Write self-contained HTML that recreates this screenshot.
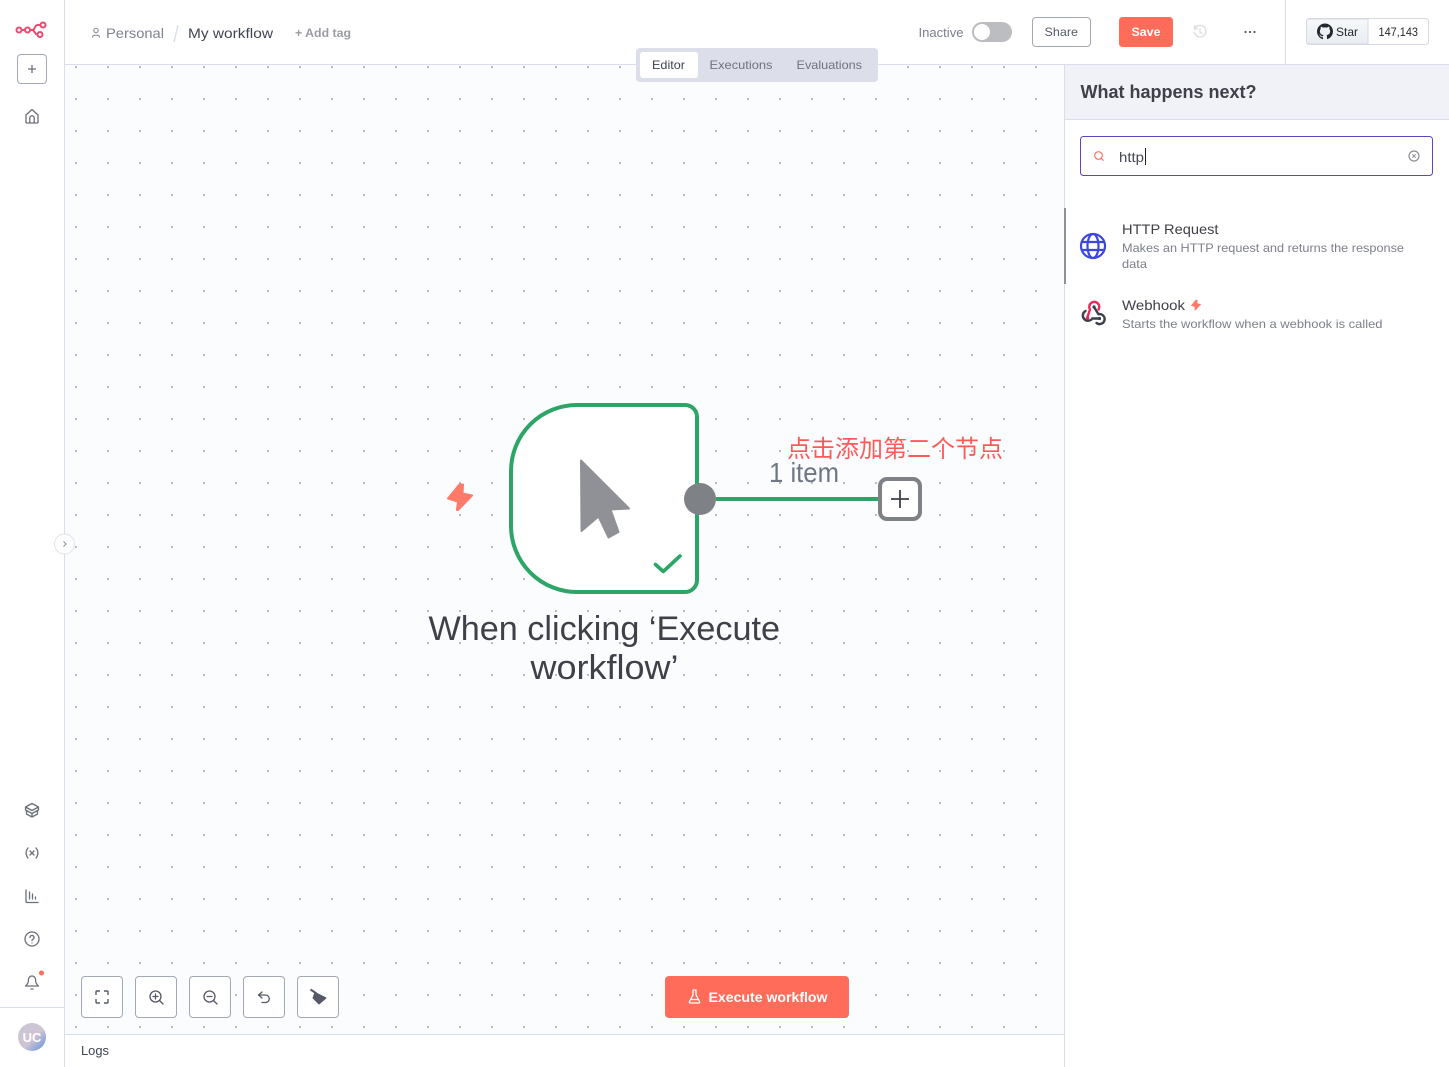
<!DOCTYPE html>
<html lang="en"><head><meta charset="utf-8"><title>My workflow</title>
<style>
html,body{margin:0;padding:0;width:1449px;height:1067px;overflow:hidden;background:#fff}
svg{display:block}
text{font-family:"Liberation Sans","Noto Sans CJK SC",sans-serif;white-space:pre}
.i{fill:none;stroke:#6b6f78;stroke-width:1.3;stroke-linecap:round;stroke-linejoin:round}
</style></head><body>
<svg width="1449" height="1067" viewBox="0 0 1449 1067" xmlns="http://www.w3.org/2000/svg">
<defs>
<pattern id="dots" x="60" y="51" width="32" height="32" patternUnits="userSpaceOnUse"><rect x="15" y="15" width="2" height="2" fill="#b9bbc0"/></pattern>
<linearGradient id="av" x1="0" y1="0" x2="1" y2="1"><stop offset="0" stop-color="#c9c6d8"/><stop offset=".55" stop-color="#cfc4d2"/><stop offset=".8" stop-color="#8fa6d8"/><stop offset="1" stop-color="#4f8ad8"/></linearGradient>
<linearGradient id="st" x1="0" y1="0" x2="0" y2="1"><stop offset="0" stop-color="#f6f8fa"/><stop offset="1" stop-color="#e9ecf1"/></linearGradient>
</defs>
<rect width="1449" height="1067" fill="#fff"/>
<rect x="65" y="65" width="999" height="969" fill="#fbfcfe"/>
<rect x="65" y="65" width="999" height="969" fill="url(#dots)"/>
<rect x="64" y="0" width="1" height="1067" fill="#d9deea"/>
<rect x="65" y="64" width="1384" height="1" fill="#d9deea"/>
<rect x="1285" y="0" width="1" height="64" fill="#d9deea"/>
<rect x="65" y="1034" width="999" height="1" fill="#d9deea"/>
<rect x="0" y="1007" width="64" height="1" fill="#d9deea"/>
<rect x="1064" y="65" width="1" height="1002" fill="#d9deea"/>
<rect x="1065" y="65" width="384" height="54" fill="#f0f2f8"/>
<rect x="1065" y="119" width="384" height="1" fill="#d9deea"/>

<!-- logo -->
<g fill="none" stroke="#ea4b71" stroke-width="2"><circle cx="19" cy="30" r="2.500"/><circle cx="27.500" cy="30" r="2.500"/><circle cx="43" cy="25" r="2.500"/><circle cx="40" cy="34.500" r="2.500"/><path d="M21.500 30h3.500M30 30h2.500c2.500 0 2-5 5-5h3M32.500 30c2 0 2 4.500 5 4.500"/></g>
<rect x="17.500" y="54.500" width="29" height="29" rx="3.500" fill="#fff" stroke="#a3a8b5"/>
<path d="M32 65v8M28 69h8" stroke="#6b6f78" stroke-width="1.300" fill="none"/>
<path class="i" d="M26 115l6-5.500 6 5.500v7a1 1 0 0 1-1 1H27a1 1 0 0 1-1-1zM29.800 123v-5a2.200 2.200 0 0 1 4.400 0v5"/>
<!-- breadcrumb -->
<circle cx="96" cy="30.500" r="2.200" fill="none" stroke="#80848e" stroke-width="1"/><path d="M92.500 37.500v-.8c0-2 7-2 7 0v.8" fill="none" stroke="#80848e" stroke-width="1"/>
<text x="106" y="38" font-size="14" fill="#7d838f" textLength="58" lengthAdjust="spacingAndGlyphs">Personal</text>
<path d="M178 25l-4 17" stroke="#d9deea" stroke-width="1.500"/>
<text x="188" y="38" font-size="14" fill="#3f4452" textLength="85" lengthAdjust="spacingAndGlyphs">My workflow</text>
<text x="295" y="37" font-size="12" font-weight="bold" fill="#9a9ca3" textLength="56" lengthAdjust="spacingAndGlyphs">+ Add tag</text>
<!-- tabs -->
<rect x="636" y="48" width="242" height="34" rx="4" fill="#dcdfe9"/>
<rect x="640" y="52" width="58" height="26" rx="3" fill="#fff"/>
<text x="652" y="69" font-size="12" fill="#3f4452" textLength="33" lengthAdjust="spacingAndGlyphs">Editor</text>
<text x="709.500" y="69" font-size="12" fill="#6f7380" textLength="63" lengthAdjust="spacingAndGlyphs">Executions</text>
<text x="796.500" y="69" font-size="12" fill="#6f7380" textLength="65.500" lengthAdjust="spacingAndGlyphs">Evaluations</text>
<!-- right header -->
<text x="918.500" y="37" font-size="12.500" fill="#7b7f8a" textLength="45" lengthAdjust="spacingAndGlyphs">Inactive</text>
<rect x="972" y="22" width="40" height="20" rx="10" fill="#bcbdc0"/><circle cx="982" cy="32" r="8" fill="#fff"/>
<rect x="1032.500" y="17.500" width="58" height="29" rx="3.500" fill="#fff" stroke="#a3a8b5"/>
<text x="1044.500" y="36" font-size="12" fill="#555a66" textLength="33.500" lengthAdjust="spacingAndGlyphs">Share</text>
<rect x="1119" y="17" width="54" height="30" rx="3.500" fill="#ff6d5a"/>
<text x="1131.500" y="36" font-size="12" font-weight="bold" fill="#fff" textLength="29" lengthAdjust="spacingAndGlyphs">Save</text>
<g fill="none" stroke="#dcdde2" stroke-width="1.300" stroke-linecap="round"><path d="M1195 28.500a5.800 5.800 0 1 1-.6 3.500M1194.500 26v3h3M1200 29v3.200l2 1.300"/></g>
<g fill="#555a66"><circle cx="1245.500" cy="32" r="1.100"/><circle cx="1250" cy="32" r="1.100"/><circle cx="1254.500" cy="32" r="1.100"/></g>
<rect x="1306.500" y="18.500" width="122" height="26" rx="3" fill="#fff" stroke="#d5d9e2"/>
<path d="M1309 19h59v25h-59a2.500 2.500 0 0 1-2.500-2.500v-20a2.500 2.500 0 0 1 2.500-2.500z" fill="url(#st)" stroke="#d5d9e2"/>
<path transform="translate(1317 23.500)" fill="#24292f" d="M8 0C3.580 0 0 3.580 0 8c0 3.540 2.290 6.530 5.470 7.590.4.070.55-.17.55-.38 0-.19-.01-.82-.01-1.490-2.010.37-2.530-.49-2.690-.94-.09-.23-.48-.94-.82-1.130-.28-.15-.68-.52-.01-.53.63-.01 1.080.58 1.230.82.72 1.210 1.870.87 2.330.66.070-.52.28-.87.51-1.070-1.780-.2-3.640-.89-3.640-3.950 0-.87.31-1.590.82-2.150-.08-.2-.36-1.020.08-2.120 0 0 .67-.21 2.200.82.64-.18 1.320-.27 2-.27.68 0 1.360.09 2 .27 1.530-1.040 2.200-.82 2.200-.82.44 1.100.16 1.920.08 2.120.51.56.82 1.270.82 2.150 0 3.070-1.870 3.750-3.650 3.950.29.25.54.73.54 1.480 0 1.070-.01 1.930-.01 2.200 0 .21.15.46.55.38A8.013 8.013 0 0016 8c0-4.420-3.580-8-8-8z"/>
<text x="1336" y="36" font-size="12" fill="#24292f" textLength="22" lengthAdjust="spacingAndGlyphs">Star</text>
<text x="1378.500" y="36" font-size="12" fill="#24292f" textLength="39.500" lengthAdjust="spacingAndGlyphs">147,143</text>
<!-- panel -->
<text x="1080.500" y="98" font-size="18" font-weight="bold" fill="#3f4048" textLength="176" lengthAdjust="spacingAndGlyphs">What happens next?</text>
<rect x="1080.500" y="136.500" width="352" height="39" rx="3" fill="#fff" stroke="#5b46c8"/>
<circle cx="1098.500" cy="155.500" r="3.800" fill="none" stroke="#ff6d5a" stroke-width="1.100"/><path d="M1101.300 158.300l2.300 2.300" stroke="#ff6d5a" stroke-width="1.100"/>
<text x="1119" y="162" font-size="14" fill="#444851" textLength="25" lengthAdjust="spacingAndGlyphs">http</text>
<rect x="1145" y="148" width="1" height="17" fill="#222"/>
<circle cx="1414" cy="156" r="5" fill="none" stroke="#8a8d94" stroke-width="1.200"/><path d="M1412.300 154.300l3.400 3.400M1415.700 154.300l-3.400 3.400" stroke="#8a8d94"/>
<rect x="1064" y="208" width="2" height="76" fill="#8f9199"/>
<g fill="none" stroke="#3c46e0" stroke-width="2.200"><circle cx="1093" cy="246" r="12"/><ellipse cx="1093" cy="246" rx="5.500" ry="12"/><path d="M1082 242h22M1082 250h22"/></g>
<text x="1122" y="234" font-size="14" fill="#3f4048" textLength="96.500" lengthAdjust="spacingAndGlyphs">HTTP Request</text>
<text x="1122" y="252" font-size="12" fill="#7d808a" textLength="282" lengthAdjust="spacingAndGlyphs">Makes an HTTP request and returns the response</text>
<text x="1122" y="268" font-size="12" fill="#7d808a" textLength="25" lengthAdjust="spacingAndGlyphs">data</text>
<g fill="none" stroke-width="2.400" stroke-linecap="round" stroke-linejoin="round">
<path d="M1085.500 311A5.200 5.200 0 1 0 1092.300 318.500H1099" stroke="#3a3f4a"/>
<path d="M1094 307L1098.500 314.200A5 5 0 1 1 1096.500 323" stroke="#3a3f4a"/>
<path d="M1098.500 309.500A5 5 0 1 0 1090 309.500L1087.500 317" stroke="#e8285a"/>
</g>
<circle cx="1094" cy="307" r="1.600" fill="#3a3f4a"/><circle cx="1099.500" cy="318.500" r="1.600" fill="#3a3f4a"/><circle cx="1087.500" cy="318" r="1.800" fill="#e8285a"/>
<text x="1122" y="310" font-size="14" fill="#3f4048" textLength="63" lengthAdjust="spacingAndGlyphs">Webhook</text>
<path transform="translate(1196 305) scale(.38) translate(-460 -497)" d="M459.500 484.500H463L462.500 493.500L472 495.500L458 510H457L458 501.500L448 498.500Z" fill="#ff7a68" stroke="#ff7a68" stroke-width="2" stroke-linejoin="round"/>
<text x="1122" y="328" font-size="12" fill="#7d808a" textLength="260.500" lengthAdjust="spacingAndGlyphs">Starts the workflow when a webhook is called</text>
<!-- node -->
<path d="M577 405H685a12 12 0 0 1 12 12V580a12 12 0 0 1-12 12H577a66 66 0 0 1-66-66V471a66 66 0 0 1 66-66z" fill="#fff" stroke="#2ca566" stroke-width="4"/>
<path d="M581 460.500L629 508.500L610.500 509.500L618.500 532L608.500 537.500L598.500 516.500L581.500 531Z" fill="#909196" stroke="#909196" stroke-width="2" stroke-linejoin="round"/>
<path d="M655.500 564.500l7.800 7 16.700-15.500" fill="none" stroke="#2ca566" stroke-width="3.600" stroke-linecap="round" stroke-linejoin="round"/>
<path d="M716 499H880" stroke="#2ca566" stroke-width="4"/>
<circle cx="700" cy="499" r="16" fill="#7e8186"/>
<rect x="880" y="479" width="40" height="40" rx="7" fill="#fff" stroke="#7e8186" stroke-width="4"/>
<path d="M900 490v18M891 499h18" stroke="#3f4048" stroke-width="1.800"/>
<path d="M459.500 484.500H463L462.500 493.500L472 495.500L458 510H457L458 501.500L448 498.500Z" fill="#ff7a68" stroke="#ff7a68" stroke-width="2" stroke-linejoin="round"/>
<text x="428.500" y="640" font-size="34" fill="#3f4048" textLength="351.500" lengthAdjust="spacingAndGlyphs">When clicking ‘Execute</text>
<text x="530.500" y="679" font-size="34" fill="#3f4048" textLength="148" lengthAdjust="spacingAndGlyphs">workflow’</text>
<text x="769" y="482" font-size="28" fill="#6f7785" textLength="70" lengthAdjust="spacingAndGlyphs">1 item</text>
<text x="787" y="457" font-size="24" fill="#ff5a5a" font-family="'Noto Sans CJK SC',sans-serif">点击添加第二个节点</text>
<!-- collapse -->
<circle cx="64.500" cy="544" r="10" fill="#fff" stroke="#dfe2ea"/><path d="M63.500 541.500l2.500 2.500-2.500 2.500" fill="none" stroke="#8a8d94"/>
<!-- bottom buttons -->
<g fill="#fff" stroke="#a3a8b5"><rect x="81.500" y="976.500" width="41" height="41" rx="3.500"/><rect x="135.500" y="976.500" width="41" height="41" rx="3.500"/><rect x="189.500" y="976.500" width="41" height="41" rx="3.500"/><rect x="243.500" y="976.500" width="41" height="41" rx="3.500"/><rect x="297.500" y="976.500" width="41" height="41" rx="3.500"/></g>
<path d="M96 995v-3a1 1 0 0 1 1-1h3M104 991h3a1 1 0 0 1 1 1v3M108 999v3a1 1 0 0 1-1 1h-3M100 1003h-3a1 1 0 0 1-1-1v-3" fill="none" stroke="#555a66" stroke-width="1.400"/>
<g fill="none" stroke="#555a66" stroke-width="1.300" stroke-linecap="round"><circle cx="155.500" cy="996.500" r="5.500"/><path d="M159.500 1000.500l3.500 3.500M155.500 994v5M153 996.500h5"/><circle cx="209.500" cy="996.500" r="5.500"/><path d="M213.500 1000.500l3.500 3.500M207 996.500h5"/><path d="M262 992l-3.500 3 3.500 3M259 995h6.500a3.700 3.700 0 0 1 0 7.500H262"/></g>
<path d="M310.500 989.500l6 4" stroke="#555a66" stroke-width="2" fill="none"/>
<path d="M315 992.500L326 998L319 1004L313 998Z" fill="#555a66" stroke="#555a66" stroke-linejoin="round"/>
<rect x="665" y="976" width="184" height="42" rx="4" fill="#ff6d5a"/>
<path d="M692.500 990h4M693 990v5l-3.500 6.500c-.4.800 0 1.500.8 1.500h8.400c.8 0 1.200-.7.800-1.500L696 995v-5M691 999.500h7" fill="none" stroke="#fff" stroke-width="1.300" stroke-linejoin="round"/>
<text x="708.500" y="1002" font-size="14" font-weight="bold" fill="#fff" textLength="119" lengthAdjust="spacingAndGlyphs">Execute workflow</text>
<text x="81" y="1055" font-size="12.500" fill="#3f4452" textLength="28" lengthAdjust="spacingAndGlyphs">Logs</text>
<!-- sidebar bottom -->
<path class="i" d="M25.500 807L32 803.500L38.500 807L32 810.500ZM25.500 807v3l6.500 3.500 6.500-3.500v-3M26.500 811v3l5.500 3 5.500-3v-3M32 813.500v3.500"/>
<path class="i" d="M28 848c-2.500 3-2.500 7 0 10M36 848c2.500 3 2.500 7 0 10M30 851l4 4M34 851l-4 4"/>
<path class="i" d="M26 890v11.500a1 1 0 0 0 1 1h11M29.500 892v7M32.500 894v5M35.500 897v2"/>
<circle class="i" cx="32" cy="939" r="7"/><path class="i" d="M30 937.500a2 2 0 1 1 2.800 1.800c-.6.300-.8.700-.8 1.200M32 943v0"/>
<path class="i" d="M25.500 986c2-1.500 3-3.500 3-6.500a3.500 3.500 0 0 1 7 0c0 3 1 5 3 6.500zM31 989h2"/>
<circle cx="41.500" cy="973" r="2.500" fill="#ff6d5a"/>
<circle cx="32" cy="1037" r="14" fill="url(#av)"/>
<text x="32" y="1042" font-size="13" font-weight="bold" fill="#fff" text-anchor="middle">UC</text>
</svg>
</body></html>
